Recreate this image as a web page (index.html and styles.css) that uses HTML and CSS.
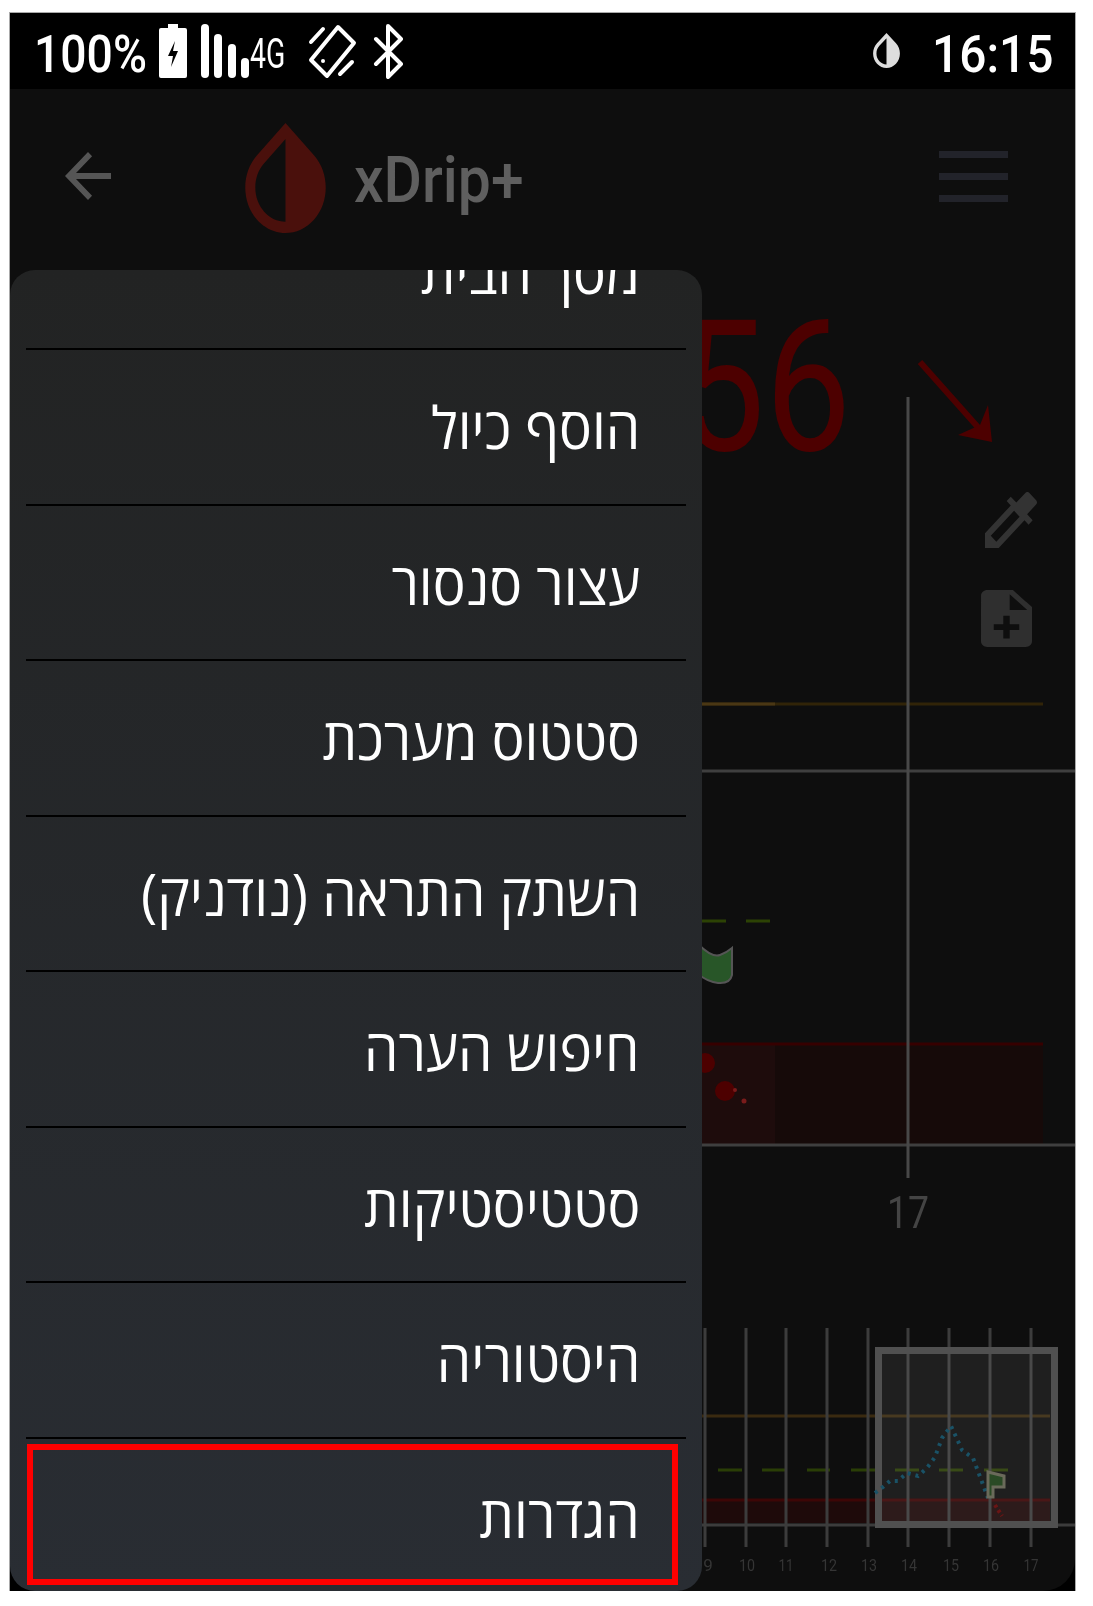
FILE: index.html
```html
<!DOCTYPE html>
<html lang="he">
<head>
    <meta charset="UTF-8">
    <meta name="viewport" content="width=device-width, initial-scale=1.0">
    <title>xDrip+</title>
    <link rel="stylesheet" href="styles.css">
</head>
<body>
    <div class="screen">
        <div class="status-bar">
            <span class="status-text battery-pct">100%</span>
            <svg class="ico-battery" viewBox="0 0 28 54"><path fill="#fff" fill-rule="evenodd" d="M9 0h10v4h7a2 2 0 0 1 2 2v46a2 2 0 0 1-2 2H2a2 2 0 0 1-2-2V6a2 2 0 0 1 2-2h7zM16 17l-7 15h5l-2 11 7-16h-5z"/></svg>
            <svg class="ico-signal" viewBox="0 0 49 54" fill="#fff">
                <rect x="0" y="0" width="8" height="54" rx="4"/>
                <rect x="13" y="10" width="8" height="44" rx="4"/>
                <rect x="27" y="20" width="8" height="34" rx="4"/>
                <rect x="40" y="34" width="8" height="20" rx="4"/>
            </svg>
            <span class="status-text net-type">4G</span>
            <svg class="ico-rotate" viewBox="0 0 50 55" fill="none" stroke="#fff" stroke-width="4" stroke-linecap="round" stroke-linejoin="round">
                <path d="M31 3L47 19L20 52L4 36z"/>
                <circle cx="16" cy="37" r="2" fill="#fff" stroke="none"/>
                <path d="M4 18L16 5M33 50L45 38"/>
            </svg>
            <svg class="ico-bt" viewBox="0 0 31 55" fill="none" stroke="#fff" stroke-width="4" stroke-linejoin="round" stroke-linecap="round">
                <path d="M3 15L28 40L15 53V2L28 15L3 40"/>
            </svg>
            <svg class="ico-drop" viewBox="3.95 2.27 16.1 19.31" preserveAspectRatio="none"><path fill="#ddd" d="M17.66 7.93L12 2.27 6.34 7.93c-3.12 3.12-3.12 8.19 0 11.31C7.9 20.8 9.95 21.58 12 21.58c2.05 0 4.1-.78 5.66-2.34 3.12-3.12 3.12-8.19 0-11.31zM12 19.59c-1.6 0-3.11-.62-4.24-1.76C6.62 16.69 6 15.19 6 13.59s.62-3.11 1.76-4.24L12 5.1v14.49z"/></svg>
            <span class="status-text clock">16:15</span>
        </div>

        <div class="app">
            <div class="app-bar">
                <svg class="ico-back" viewBox="4 4 16 16" preserveAspectRatio="none"><path fill="#555" d="M20 11H7.83l5.59-5.59L12 4l-8 8 8 8 1.41-1.41L7.83 13H20v-2z"/></svg>
                <svg class="ico-logo" viewBox="3.95 2.27 16.1 19.31" preserveAspectRatio="none"><path fill="#4a100c" d="M17.66 7.93L12 2.27 6.34 7.93c-3.12 3.12-3.12 8.19 0 11.31C7.9 20.8 9.95 21.58 12 21.58c2.05 0 4.1-.78 5.66-2.34 3.12-3.12 3.12-8.19 0-11.31zM12 19.59c-1.6 0-3.11-.62-4.24-1.76C6.62 16.69 6 15.19 6 13.59s.62-3.11 1.76-4.24L12 5.1v14.49z"/></svg>
                <span class="app-title">xDrip+</span>
                <div class="hamburger"><i></i><i></i><i></i></div>
            </div>

            <!-- viewBox uses screenshot coordinates -->
            <svg class="graph" viewBox="10 270 1065 1320">
                <text x="851" y="450" text-anchor="end" class="reading" textLength="258" lengthAdjust="spacingAndGlyphs">156</text>
                <path d="M920 362L984 434" stroke="#4d0000" stroke-width="6" fill="none"/>
                <path d="M992 442L988 405L980 425L958 435z" fill="#4d0000"/>

                <svg x="985" y="492" width="52" height="56" viewBox="3 3 18 18" preserveAspectRatio="none"><path fill="#333" d="M20.71 5.63l-2.34-2.34c-.39-.39-1.02-.39-1.41 0l-3.12 3.12-1.93-1.91-1.41 1.41 1.42 1.42L3 16.25V21h4.75l8.92-8.92 1.42 1.42 1.41-1.41-1.92-1.92 3.12-3.12c.4-.4.4-1.03.01-1.42zM6.92 19L5 17.08l8.06-8.06 1.92 1.92L6.92 19z"/></svg>
                <svg x="981" y="590" width="51" height="57" viewBox="4 2 16 20" preserveAspectRatio="none"><path fill="#2f2f2f" d="M14 2H6c-1.1 0-1.99.9-1.99 2L4 20c0 1.1.89 2 1.99 2H18c1.1 0 2-.9 2-2V8l-6-6zm2 14h-3v3h-2v-3H8v-2h3v-3h2v3h3v2zm-3-7V3.5L18.5 9H13z"/></svg>

                <!-- main chart -->
                <rect x="702" y="1043" width="341" height="102" fill="#160a09"/>
                <rect x="702" y="1043" width="73" height="102" fill="#1e0c0c"/>
                <path d="M702 1044H1043" stroke="#360000" stroke-width="3"/>
                <path d="M702 704H1043" stroke="#312408" stroke-width="3"/>
                <path d="M702 704H775" stroke="#4a3714" stroke-width="3"/>
                <path d="M702 771H1075M702 1145H1075" stroke="#3f3f3f" stroke-width="3"/>
                <path d="M908 397V1178" stroke="#484848" stroke-width="3"/>
                <path d="M702 921H726M746 921H770" stroke="#2c4204" stroke-width="3"/>
                <path d="M698 944Q712 958 720 955Q726 953 732 948V975Q730 984 718 983Q708 982 698 974z" fill="#285628" stroke="#555" stroke-width="2"/>
                <circle cx="705" cy="1063" r="10" fill="#4d0000"/>
                <circle cx="725" cy="1091" r="10" fill="#4d0000"/>
                <circle cx="735" cy="1090" r="2" fill="#7a1b1b"/>
                <circle cx="744" cy="1101" r="2.5" fill="#7a1b1b"/>
                <text x="908" y="1228" class="hour-big" text-anchor="middle" textLength="42" lengthAdjust="spacingAndGlyphs">17</text>

                <!-- preview chart -->
                <rect x="702" y="1500" width="348" height="23" fill="#1e0a0a"/>
                <path d="M702 1500H1050" stroke="#3d0606" stroke-width="3"/>
                <path d="M702 1416H1050" stroke="#3a2a10" stroke-width="3"/>
                <path d="M718 1470H742M762 1470H786M807 1470H830M851 1470H875M895 1470H919M939 1470H963M984 1470H1008" stroke="#2a3e06" stroke-width="3"/>
                <path d="M702 1525H1075" stroke="#3c3c3c" stroke-width="3"/>
                <path d="M705 1328V1547M746 1328V1547M786 1328V1547M827 1328V1547M868 1328V1547M908 1328V1547M949 1328V1547M990 1328V1547M1031 1328V1547" stroke="#3c3c3c" stroke-width="3"/>
                <rect x="878.500" y="1350.500" width="176" height="174" fill="#fff" fill-opacity=".07" stroke="#505050" stroke-width="7"/>
                <path d="M875 1493L883 1487L890 1481H898L907 1473L918 1476L927 1468L935 1457L942 1438L951 1426L962 1450L973 1458L982 1482L988 1498" fill="none" stroke="#1a5266" stroke-width="4" stroke-dasharray="3 5"/>
                <path d="M988 1472L1004 1476V1487H993V1497H988z" fill="#2a4a25" stroke="#6a6a5a" stroke-width="3"/>
                <path d="M995 1505L1002 1516" stroke="#6a1515" stroke-width="4" stroke-dasharray="3 3"/>
                <g class="hour-small" text-anchor="middle">
                    <text x="708" y="1571">9</text>
                    <text x="747" y="1571" textLength="16" lengthAdjust="spacingAndGlyphs">10</text>
                    <text x="786" y="1571" textLength="15" lengthAdjust="spacingAndGlyphs">11</text>
                    <text x="829" y="1571" textLength="16" lengthAdjust="spacingAndGlyphs">12</text>
                    <text x="869" y="1571" textLength="16" lengthAdjust="spacingAndGlyphs">13</text>
                    <text x="909" y="1571" textLength="16" lengthAdjust="spacingAndGlyphs">14</text>
                    <text x="951" y="1571" textLength="16" lengthAdjust="spacingAndGlyphs">15</text>
                    <text x="991" y="1571" textLength="16" lengthAdjust="spacingAndGlyphs">16</text>
                    <text x="1031" y="1571" textLength="15" lengthAdjust="spacingAndGlyphs">17</text>
                </g>
            </svg>
        </div>

        <div class="drawer">
            <ul class="menu">
                <li><span>מסך הבית</span></li>
                <li><span>הוסף כיול</span></li>
                <li><span>עצור סנסור</span></li>
                <li><span>סטטוס מערכת</span></li>
                <li><span>השתק התראה (נודניק)</span></li>
                <li><span>חיפוש הערה</span></li>
                <li><span>סטטיסטיקות</span></li>
                <li><span>היסטוריה</span></li>
                <li class="last"><span>הגדרות</span></li>
            </ul>
            <div class="highlight"></div>
        </div>
    </div>
</body>
</html>
```

FILE: styles.css
```css
body {
    margin: 0;
    background-color: #ffffff;
    padding: 13px 0 0 10px;
    font-family: Roboto, "Liberation Sans", sans-serif;
}
.screen {
    position: relative;
    width: 1065px;
    height: 1578px;
    background-color: #000000;
    overflow: hidden;
    box-shadow: 0 0 0 1px #aaaaaa;
    display: flex;
    flex-direction: column;
    filter: blur(0.5px); /* the source screenshot is an upscaled, soft capture */
}

/* status bar */
.status-bar {
    height: 76px;
    flex: none;
    display: flex;
    align-items: center;
    padding: 0 25px 0 24px;
}
.status-text {
    color: #ffffff;
    font-size: 52px;
    font-weight: 500;
    white-space: nowrap;
    display: inline-block;
    position: relative;
    top: 3px;
    transform-origin: left center;
}
.battery-pct {
    width: 111px;
    transform: scaleX(0.89);
}
.ico-battery {
    width: 28px;
    height: 54px;
    margin-left: 14px;
}
.ico-signal {
    width: 49px;
    height: 54px;
    margin-left: 14px;
}
.net-type {
    width: 36px;
    font-size: 43px;
    font-weight: 400;
    top: 2px;
    transform: scaleX(0.66);
}
.ico-rotate {
    width: 50px;
    height: 55px;
    margin-left: 21px;
}
.ico-bt {
    width: 31px;
    height: 55px;
    margin-left: 16px;
}
.ico-drop {
    width: 27px;
    height: 35px;
    margin-left: auto;
    margin-top: -2px;
}
.clock {
    width: 118px;
    margin-left: 32px;
    transform: scaleX(0.92);
}

/* app */
.app {
    flex: 1;
    min-height: 0;
    background-color: #0e0e0e;
    border-radius: 0 0 32px 32px;
    overflow: hidden;
}
.app-bar {
    height: 181px;
    display: flex;
    align-items: flex-start;
}
.ico-back {
    width: 46px;
    height: 48px;
    margin: 63px 0 0 55px;
}
.ico-logo {
    width: 81px;
    height: 110px;
    margin: 34px 0 0 134px;
}
.app-title {
    width: 166px;
    margin: 54px 0 0 28px;
    font-size: 64px;
    font-weight: 500;
    color: #5f5f5f;
    white-space: nowrap;
    display: inline-block;
    transform: scaleX(0.92);
    transform-origin: left center;
}
.hamburger {
    width: 69px;
    margin: 62px 67px 0 auto;
    display: flex;
    flex-direction: column;
    gap: 15px;
}
.hamburger i {
    display: block;
    height: 7px;
    background-color: #22232a;
}
.graph {
    display: block;
    width: 1065px;
    height: 1320px;
}
.reading {
    font-family: Roboto, sans-serif;
    font-size: 184px;
    fill: #4d0000;
}
.hour-big {
    font-size: 44px;
    fill: #444444;
}
.hour-small {
    font-size: 17px;
    fill: #353535;
}

/* drawer */
.drawer {
    position: absolute;
    left: 0;
    top: 257px;
    bottom: 0;
    width: 692px;
    background: linear-gradient(#222323, #292d33);
    border-radius: 25px;
    overflow: hidden;
}
.menu {
    list-style: none;
    margin: -75.5px 0 0;
    padding: 0 16px;
}
.menu li {
    height: 153.5px;
    border-bottom: 2px solid #000000;
    direction: rtl;
    padding-right: 46px;
    display: flex;
    align-items: center;
}
.menu li.last {
    border-bottom: 0;
}
.menu span {
    color: #ffffff;
    font-family: "Open Sans", "Liberation Sans", sans-serif;
    font-size: 58px;
    white-space: nowrap;
    display: inline-block;
    transform: scaleX(0.945);
    transform-origin: right center;
}
.highlight {
    position: absolute;
    left: 17px;
    top: 1174px;
    width: 639px;
    height: 129px;
    border: 6px solid #ff0000;
}
```
